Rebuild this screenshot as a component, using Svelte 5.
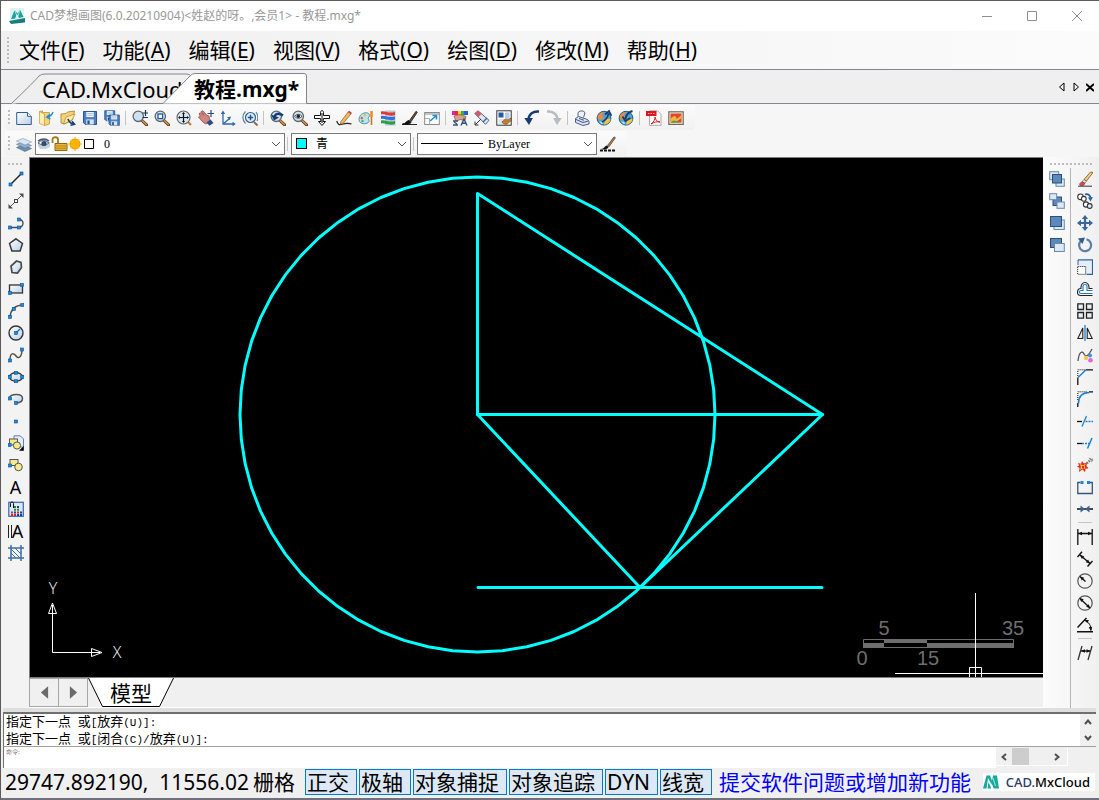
<script>
  const dot = (x, y) => `<rect x="${x - 1.5}" y="${y - 1.5}" width="3" height="3" fill="#1c8ae6" stroke="#0b4f94" stroke-width=".6"/>`;
  const lens = (inner) =>
    `<path d="M10 10.5l4.6 4.4" stroke="#5d3a1c" stroke-width="3" stroke-linecap="round"/><path d="M10.4 10.6l4 3.9" stroke="#d98b45" stroke-width="1.6" stroke-linecap="round"/><circle cx="6.3" cy="6.3" r="5.2" fill="#cfe0ee" stroke="#5a6672" stroke-width="1.3"/>${inner}`;
  const floppy = (x, y, s) =>
    `<g transform="translate(${x} ${y}) scale(${s})"><path d="M0 0h14v14H2l-2-2z" fill="#4a80c4" stroke="#214d8c"/><rect x="3" y=".5" width="8" height="5.5" fill="#eef5fb"/><path d="M4 2.2h6M4 4h6" stroke="#8fb0d4" stroke-width=".8"/><rect x="3" y="8.5" width="8" height="5.5" fill="#d6e4f3"/><rect x="4.2" y="9.6" width="2.4" height="4" fill="#29538f"/></g>`;
  const arrowhead = (x, y, a) => `<path d="M0 0l-4 -1.8v3.6z" transform="translate(${x} ${y}) rotate(${a})" fill="#111"/>`;
  const globe =
    `<circle cx="8" cy="8.2" r="6.9" fill="#4fa3d0" stroke="#1f5a86"/><path d="M1.8 6c2-3 4-4 6-3.6L6 5.2 7.600 8 5 10 2 9z" fill="#f08a3c"/><path d="M8 14.600l1-4 3-2 2.600.6c-.3 2.800-3 5-6.600 5.400z" fill="#f2c43c"/><path d="M3 11.500l3 .2 1.200 2.600C5 14 4 13 3 11.500z" fill="#a8e4e8"/>`;

  const icons = {
    fresh: `<path d="M.7 2.500h10.800l3.800 3.800v8.200H.7z" fill="url(#paper)" stroke="#2f5f9a"/><path d="M11.500 2.500v3.800h3.800" fill="#fff" stroke="#2f5f9a"/>`,
    open: `<path d="M1.500 1.500l3-.7v1.700h7v11.500l-5 1.500z" fill="#f5d27a" stroke="#b98b2a" stroke-width=".7"/><path d="M1.500 1.500L6.500 4v11.500l-5-2z" fill="#fdeeb4" stroke="#c59a3b" stroke-width=".7"/><path d="M15 2c-1 3-3 4.500-5.500 5M12 4.200L8.800 7l3.600 2" fill="none" stroke="#2a8ad4" stroke-width="1.500"/>`,
    recent: `<path d="M1 4l5-.5L7.500 2l7-1-2 9-8 4-3.500-1z" fill="#f5d27a" stroke="#a87a22" stroke-width=".8"/><path d="M3.500 14L6 7l9-3-3 6z" fill="#fdeba6" stroke="#a87a22" stroke-width=".6"/><path d="M8 9c1 3 2.500 4.500 5.500 5M10.500 15.200l4-1-2.500-3" fill="none" stroke="#1c3f75" stroke-width="1.700"/>`,
    save: floppy(1.5, 1.5, 0.93),
    saveall: floppy(0.7, 0.7, 0.72) + floppy(5, 5, 0.74),
    zoomrt: lens('<path d="M13.500 0v6M10.500 3h5.500M10.500 7.500h5.500" stroke="#17325f" stroke-width="1.200"/>'),
    zoomwin: lens('<rect x="4" y="4" width="4.600" height="4.600" fill="#fff" stroke="#27569a" stroke-width="1.300"/>'),
    zoomext: `<path d="M11 11l4 4" stroke="#c97a35" stroke-width="2.200"/><circle cx="7.500" cy="7.500" r="6.500" fill="#dbe6ee" stroke="#59636d" stroke-width="1.100"/><path d="M7.500 3v9M3 7.500h9" stroke="#111" stroke-width="1.200"/><path d="M7.500 2L6 4h3zM7.500 13L6 11h3zM2 7.500L4 6v3zM13 7.500L11 6v3z" fill="#111"/>`,
    pan: `<path d="M1 3.500l2-.8 3 2.500L3 1.500 5 .8l4 4.500 2 .7 1 5.500-4 2.500C5.500 13.500 3 10 .5 7l1.800-.6z" fill="#cf8580" stroke="#8f4f4e" stroke-width=".8"/><path d="M8.500 12.500l4-3L15.500 13l-4 2.700z" fill="#2d4c80"/><path d="M13 0v7M9.500 3.500h6.500" stroke="#2a4e86" stroke-width="1.200"/>`,
    ucs: `<path d="M3 3v11h10M3 14l6-5" fill="none" stroke="#2e69ad" stroke-width="1.300"/><path d="M3 .5L.8 4h4.400zM15.800 14l-3.300-2.200v4.400zM11 6.500l-4 .8 2.800 3z" fill="#2e69ad"/>`,
    zoomdyn: `<path d="M12 12l3.500 3.500" stroke="#9a6b45" stroke-width="2"/><circle cx="8.500" cy="7.500" r="5" fill="#e3eef8" stroke="#2e5f9b" stroke-width="1.200"/><path d="M8.500 4.800v5.400M5.800 7.500h5.400" stroke="#23518e" stroke-width="1.500"/><path d="M3.500 1.500C0 5 0 10 3.500 13.500M14 2c2 3 2 7 1 9" fill="none" stroke="#5a84b6" stroke-width="1.200"/>`,
    zoomprev: lens('<path d="M4.500 7.500C5 3.500 9 2.500 13 5.500" fill="none" stroke="#173c78" stroke-width="2.400"/><path d="M1 4.500l3 6 5-3z" fill="#173c78"/>'),
    find: lens('<path d="M2.500 6.300q3.800-4 7.600 0q-3.800 4-7.600 0z" fill="#fff" stroke="#333" stroke-width=".8"/><circle cx="6.300" cy="6.300" r="1.700" fill="#222"/>'),
    plane: `<path d="M6.500 5.500V2.500C6.500 0 9.500 0 9.500 2.500v3h6v3h-6L9 11.500h2.500L8 15.500 4.500 11.500H7l-.5-3h-6v-3z" fill="#fff" stroke="#111"/><path d="M8 3v10" stroke="#111"/>`,
    pencil: `<path d="M.8 11C1.500 14 3 15.300 6 14.300c3-1 6.500-1.500 9.500-.3" fill="none" stroke="#222" stroke-width="1.200"/><path d="M5 11.500L12.500 1.500l2.800 2L7.500 13l-3.200 1.300z" fill="#f0b862" stroke="#9b6a25" stroke-width=".8"/><path d="M12.500 1.500l2.800 2" stroke="#c3475a" stroke-width="2"/>`,
    palette: `<path d="M1 9.500C1 5 5 2.500 8.500 2.800 12 3 12 6 10.500 7.500c-1 1.500 1 2 .5 4-1 3-10 3.500-10-2z" fill="#bfe3ea" stroke="#4494b0"/><circle cx="3.800" cy="8" r="1.200" fill="#e2574b"/><circle cx="7" cy="5.300" r="1.200" fill="#f6b73c"/><circle cx="4.500" cy="11" r="1.200" fill="#4baf50"/><path d="M13.500 1v6" stroke="#f08a1e" stroke-width="2.600"/><path d="M13.500 7v8" stroke="#c9771e" stroke-width="1.600"/>`,
    layerpal: `<path d="M5 .5h10.500v15H5z" fill="#b9c6d6"/><path d="M1 1.500c4-1.500 7 2.500 14 .5v3C9 7 5 3.500 1 4.500z" fill="#e23a33"/><path d="M1 6c4-1.500 7 2.500 14 .5v3C9 11.500 5 8 1 9z" fill="#2f6fe0"/><path d="M1 10.500c4-1.500 7 2.500 14 .5v3c-6 2-10-1.500-14-.5z" fill="#2aa13c"/>`,
    brush: `<path d="M0 14.500h15M.5 14c3 0 3.500-3 6.500-3.500l2 2C8 14 5 15 .5 14z" fill="#111" stroke="#111" stroke-width=".9"/><path d="M7.500 10.500L14 1.300l1.300.9L9 11.800z" fill="#6b4a32" stroke="#222" stroke-width=".8"/>`,
    extern: `<rect x=".7" y="2.500" width="14.600" height="12" fill="#fff" stroke="#8a8a8a"/><path d="M.7 4h14.600" stroke="#8a8a8a"/><path d="M6 11l6-5M8.500 5.500h4v4" fill="none" stroke="#1d8bd8" stroke-width="1.600"/><path d="M1 8.500h4.500v6" fill="none" stroke="#aaa"/>`,
    style: `<path d="M0 1h3v4H0z" fill="#e31dc0"/><path d="M3 1h3v4H3z" fill="#e5312c"/><path d="M6 1h3v4H6z" fill="#f6d31e"/><path d="M9 1h3v4H9z" fill="#2fb24a"/><path d="M12 1h4v4h-4z" fill="#225be5"/><path d="M2 6l6-1.500 6 2-1 4-5-1-4 2z" fill="#d9a08c" stroke="#84503f" stroke-width=".7"/><path d="M1 11h5M1 15h5M2 12l3 2M9 15.500l3-6.500 3 6.500M10.300 13.200h3.500" fill="none" stroke="#35537c" stroke-width="1.400"/>`,
    match: `<path d="M.8 3.500L4 .8l11 9.500-3.500 4z" fill="#dfe8f0" stroke="#58636e"/><path d="M.8 3.500L4 .8l3.500 3-3.200 3.400z" fill="#d2596a"/><path d="M1 15l6-6M1 11.500V15h3.500" fill="none" stroke="#333"/><path d="M9 12l4-4" stroke="#386aa8" stroke-width="1.400"/>`,
    block: `<rect x=".8" y=".8" width="14.400" height="14.400" fill="#fff" stroke="#333"/><path d="M2.500 2.500h5v5h-5z" fill="#2659a0"/><path d="M9 2.500h4.500v7H9z" fill="#b8cbe0"/><path d="M2.500 9h6v5h-6z" fill="#dbe6f0"/><path d="M6 12c2-3 4-3 6-2l3-2 .8 2-3 2.500c-1 2-5 3-6.800-.5z" fill="#c97b33" stroke="#6d3d14" stroke-width=".6"/>`,
    undo: `<path d="M15 1.500C9 1 5 4 4.500 9.500" fill="none" stroke="#173c72" stroke-width="2.600"/><path d="M.3 8h8.600L5 15z" fill="#173c72"/>`,
    redo: `<path d="M1 1.500C7 1 11 4 11.500 9.500" fill="none" stroke="#b7bcc2" stroke-width="2.600"/><path d="M7.100 8h8.600L11 15z" fill="#b7bcc2"/>`,
    print: `<path d="M4 6.500V2.500L6 1h3.500L11 3 9.500 7.500" fill="#eef1f8" stroke="#53648f"/><path d="M1.500 8.500l3-2 9 3 1.500 2v2.500L9 15.500 1.500 12.500z" fill="#dde3f0" stroke="#4c5d8a"/><path d="M2 9.500l7 3 5.500-1.500M5 8.500l5 1.800" fill="none" stroke="#44558a"/>`,
    globeup: globe + `<path d="M6 12C10 10 12 7 12.500 3.500M9 4.500l4-3.500 2.500 4.800" fill="none" stroke="#173a70" stroke-width="1.700"/>`,
    globedown: globe + `<path d="M14.500 1C11 2 8 5 7.500 9M4.500 6.500L7.500 11l5-3" fill="none" stroke="#173a70" stroke-width="1.900"/>`,
    pdf: `<path d="M3.500.8h8l3.500 3.500v11H3.500z" fill="#fff" stroke="#a9a9a9"/><path d="M0 1h10.500v5H0z" fill="#d8171e"/><path d="M2 3.500h6.500" stroke="#f7a4a4" stroke-width="1.200" stroke-dasharray="1.500 1"/><path d="M5 14c3-2 4-5 4-7 .5 3 2 5 5 5-3-.8-6 .3-9 2z" fill="none" stroke="#d8171e"/>`,
    image: `<rect x=".8" y="1.800" width="14.400" height="12.600" fill="#efe7dc" stroke="#77695c" stroke-width="1.200"/><rect x="2.500" y="3.500" width="11" height="9" fill="#e0452c"/><path d="M2.500 9c3-4 6-4 6 0l5-4v3l-6 4.500h-5z" fill="#f4b43c"/><path d="M2.500 12.500l3-2 8 2z" fill="#499a3a"/>`,
    layers: `<path d="M.5 11.500L7 9l8.500 3.500L9 15.500z" fill="#6e8dac" stroke="#49688a" stroke-width=".6"/><path d="M.5 8.300L7 6l8.500 3.500L9 12.300z" fill="#93aec8" stroke="#5b7b9c" stroke-width=".6"/><path d="M.5 5L7 2.500 15.500 6 9 9z" fill="#dbe7f2" stroke="#7896b3" stroke-width=".6"/>`,
    brushline: `<path d="M1 13c3 0 3.500-3 6-3.500l1.500 1.500C8 13 5 14 1 13z" fill="#111"/><path d="M7.500 9.500L14 .8l1.500 1L9 10.800z" fill="#b3753f" stroke="#333" stroke-width=".6"/><path d="M0 14.500h16" stroke="#111" stroke-width="2" stroke-dasharray="3 1"/>`,

    line: `<path d="M2 14L14 2" stroke="#222" stroke-width="1.500"/>${dot(2.5, 13.5)}${dot(13.5, 2.5)}`,
    xline: `<path d="M1 15L15 1" stroke="#555"/><path d="M.5 15.500v-4.500l4.500 4.500zM15.500.5v4.500L11 .5z" fill="#4a4a55"/><rect x="6.500" y="6.500" width="3" height="3" fill="#fff" stroke="#444"/>`,
    pline: `<path d="M1.500 12.500h10M10.500 4.500c6-.5 6 8 0 8" fill="none" stroke="#4a4a4a" stroke-width="1.400"/>${dot(2, 12.5)}${dot(11, 12.5)}${dot(11, 4.5)}`,
    pentagon: `<path d="M8 1.800l6.500 4.700-2.400 7.500H3.900L1.500 6.500z" fill="url(#paper)" stroke="#3a3a3a" stroke-width="1.500"/>`,
    polygon: `<path d="M8.500 2l4.500 1.500.5 5-4 5.500-5.500-.5-1-6.500z" fill="url(#paper)" stroke="#4a4a4a" stroke-width="1.700"/>`,
    rect: `<rect x="1.500" y="4" width="13" height="8" fill="url(#paper)" stroke="#333" stroke-width="1.300"/>${dot(2, 12)}${dot(14, 4)}`,
    arc: `<path d="M2 14.500C2.500 7 7 2.500 14 2" fill="none" stroke="#57534c" stroke-width="1.500"/>${dot(2, 14)}${dot(6, 6)}${dot(14.300, 2)}`,
    circle: `<circle cx="8" cy="8" r="7" fill="url(#paper)" stroke="#333" stroke-width="1.400"/><path d="M8 8l4-4" stroke="#1670c4" stroke-width="1.300"/>${dot(8, 8)}`,
    spline: `<path d="M2 13C2 5 6 6 8 9s6 2 6-7" fill="none" stroke="#555043" stroke-width="1.500"/>${dot(2, 13.5)}${dot(14, 2.500)}`,
    ellipse: `<ellipse cx="8" cy="8" rx="6.500" ry="4.200" fill="url(#paper)" stroke="#333" stroke-width="1.400"/>${dot(8, 3.800)}${dot(8, 12.200)}${dot(1.800, 8)}${dot(14.200, 8)}`,
    earc: `<path d="M1.500 7C2 4 5 3.500 8.500 3.500c8 0 8 8 0 8.500" fill="url(#paper)" stroke="#555" stroke-width="1.500"/>${dot(2, 7.500)}${dot(8, 12)}`,
    point: dot(8, 8.5),
    insert: `<path d="M6 .8h6l3.500 3V12H6z" fill="#e4eefa" stroke="#5b83b3"/><rect x="1.500" y="4" width="8" height="6" fill="#f6e98e" stroke="#555"/><circle cx="9" cy="10.500" r="3.600" fill="#f6e98e" stroke="#555"/>${dot(1.600, 10)}<path d="M15.800 11v4.800H11z" fill="#000"/>`,
    make: `<rect x="2" y="2.500" width="8" height="6" fill="#f6e98e" stroke="#555"/><circle cx="10.500" cy="10" r="3.800" fill="#f6e98e" stroke="#555"/>${dot(2, 8.500)}`,
    hatch: `<rect x=".8" y="1.300" width="14.500" height="14" fill="#dbe7f6" stroke="#3468ac" stroke-width="1.200"/><path d="M3 11.500h2M3 14h2M6 14h2M9 11.500h2" stroke="#e02020" stroke-width="2"/><path d="M6 6h2M6 8.800h2M9 8.800h2" stroke="#1b8c2b" stroke-width="2"/><path d="M9 6h2M12 11.500h2M9 14h2M12 14h2M6 11.500h2" stroke="#183d9c" stroke-width="2"/><path d="M2.500 6V2.500c0-2 3-2 3 0V7" fill="none" stroke="#111"/>`,
    region: `<path d="M3 0v16M13 0v16M0 3h16M0 13h16" stroke="#3b6ea6" stroke-width="1.500"/><path d="M3 4l9 9M3 8l5 5M7 3l6 6" stroke="#3b6ea6"/>`,

    front: `<rect x=".7" y=".7" width="9" height="8" fill="#dce8f4" stroke="#6989ab"/><rect x="7" y="8" width="8.300" height="7.300" fill="#dce8f4" stroke="#6989ab"/><rect x="3.500" y="3.500" width="9" height="8.500" fill="#5c88ba" stroke="#274f80"/>`,
    back: `<rect x="4" y="4" width="8.500" height="8.500" fill="#5c88ba" stroke="#274f80"/><rect x=".7" y=".7" width="7" height="6" fill="#dce8f4" stroke="#6989ab"/><rect x="8" y="9" width="7.300" height="6.300" fill="#dce8f4" stroke="#6989ab"/>`,
    above: `<rect x="5" y="5" width="10.300" height="9.500" fill="#dce8f4" stroke="#6989ab"/><rect x="1.500" y="1.500" width="11" height="10" fill="#5c88ba" stroke="#274f80"/>`,
    below: `<rect x="1.500" y="1.500" width="11" height="9" fill="#5c88ba" stroke="#274f80"/><rect x="5.500" y="6.500" width="9.800" height="8" fill="#dce8f4" stroke="#6989ab"/>`,

    erase: `<path d="M1 15.200h14" stroke="#333"/><path d="M7 8.500L13.500 1 16 1.500 9.500 10z" fill="#f4cf73" stroke="#6e5630" stroke-width=".8"/><path d="M7 8.500l2.500 1.700L8 12.200 5 10.800z" fill="#dfe8f2" stroke="#555" stroke-width=".6"/><path d="M5 10.500l3 2-1.500 2h-3.200L2.500 13z" fill="#d9484d" stroke="#803036" stroke-width=".6"/>`,
    copy: `<circle cx="3.500" cy="3.800" r="2.800" fill="#fff" stroke="#333" stroke-width="1.100"/><circle cx="6.800" cy="5.800" r="2.400" fill="#fff" stroke="#333" stroke-width="1.100"/><circle cx="9" cy="11.500" r="2.600" fill="#fff" stroke="#333" stroke-width="1.100"/><circle cx="12.700" cy="13" r="2.400" fill="#dfe9f4" stroke="#333" stroke-width="1.100"/><path d="M8 1.500c3-1 5 .5 5.500 3" fill="none" stroke="#245b9c" stroke-width="1.800"/><path d="M11 4.500l2.600 4 2.200-4.500z" fill="#245b9c"/>`,
    move: `<path d="M8 2v12M2 8h12" stroke="#39689f" stroke-width="2.200"/><path d="M8 0L4.800 4h6.400zM8 16l-3.200-4h6.400zM0 8l4-3.200v6.400zM16 8l-4-3.200v6.400z" fill="#39689f"/>`,
    rotate: `<path d="M9.500 2.300a6 6 0 1 1-5.500 1.500" fill="none" stroke="#5b7fa8" stroke-width="2.200"/><path d="M.8 1.500L8 .5 5.500 7z" fill="#315d92"/>`,
    scale: `<rect x="1" y="1" width="14.300" height="14" fill="#e5eef9"/><path d="M1 .8h14.500v14.500H9.500" fill="none" stroke="#2e64a5" stroke-width="1.200"/><path d="M1 1v5" stroke="#2e64a5"/><rect x=".7" y="7.500" width="8" height="7.800" fill="#fff" stroke="#111" stroke-dasharray="1 1"/>`,
    offset: `<path d="M15.500 7.500H12C12.500-.5 3.500-.5 4 7.500H3.500C-.5 8 -.5 14.500 3.500 14.500H15.500" fill="#fff" stroke="#222" stroke-width="1.100"/><path d="M15.500 9.500H10V5.500C10 2.800 6 2.800 6 5.500V9.500H4C1.800 9.500 1.800 12.500 4 12.500H15.500" fill="none" stroke="#1d75c9" stroke-width="1.100"/>`,
    array: `<path d="M.8.800h5.700v5.700H.8zM9.500.800h5.700v5.700H9.500zM.8 9.500h5.700v5.700H.8zM9.500 9.500h5.700v5.700H9.500z" fill="#e7eef7" stroke="#222" stroke-width="1.300"/>`,
    mirror: `<path d="M8 0v16" stroke="#1f7dd0" stroke-width="1.300"/><path d="M5.800 3v10.500H.8zM10.200 3v10.500h5z" fill="#e8eef6" stroke="#222" stroke-width="1.100"/>`,
    pedit: `<path d="M1 14C2 5 5 3 7 7s5 1 8-5" fill="none" stroke="#555" stroke-width="1.300"/><circle cx="9" cy="11" r="2.200" fill="#f6c451"/><circle cx="13" cy="8.500" r="2" fill="#4c88e8"/><circle cx="13.500" cy="13.200" r="2.300" fill="#dc67dc"/>`,
    chamfer: `<path d="M.8 16V8.500M9 .8h7" stroke="#111" stroke-width="1.300"/><path d="M1 8.500L9 .8" stroke="#1d7fd4" stroke-width="1.500"/><path d="M.8 7V.8h7" fill="none" stroke="#111" stroke-dasharray="1 1"/>`,
    fillet: `<path d="M.8 16v-4M12 .8h4" stroke="#111" stroke-width="1.300"/><path d="M1.500 12.500C1.500 5 6 1.500 12.500 1.500" fill="none" stroke="#1d7fd4" stroke-width="1.500"/><path d="M.8 9V.8h9" fill="none" stroke="#111" stroke-dasharray="1 1"/>`,
    trim: `<path d="M0 8.500h5" stroke="#111" stroke-width="1.300"/><path d="M5 13.500L9.500 3" stroke="#1d7fd4" stroke-width="1.300"/><path d="M8.500 8.500h7.500" stroke="#1d7fd4" stroke-width="1.300" stroke-dasharray="2 1"/>`,
    extend: `<path d="M0 8.500h5" stroke="#111" stroke-width="1.300"/><path d="M5 8.500h7" stroke="#1d7fd4" stroke-width="1.300" stroke-dasharray="2 1"/><path d="M10.500 13.500L15 3" stroke="#1d7fd4" stroke-width="1.500"/>`,
    explode: `<path d="M8 8L14.500 2" stroke="#777" stroke-width="2.400" stroke-dasharray="1.500 1"/><path d="M12 .8l1.500 2L16 2l-1.500 3" fill="none" stroke="#888"/><path d="M1 6l3 .7L5 4l2 2.500 3-1L9.500 9l2 2.200-3 .8-.5 3.300L5.500 12.500 2 15l.5-4L0 9.500l2-1z" fill="#e5322a"/><path d="M3 7l3 1.500L9 6.500 7.500 9l1 3L6 11l-3 2 1-3z" fill="#fbd43c"/><path d="M5 9h2v2H5z" fill="#e5322a"/>`,
    brk: `<path d="M3.500 3.500H.8v11h14.500v-11h-3" fill="none" stroke="#35547c" stroke-width="1.300"/><path d="M3.500 2h3v3h-3zM10 2h3v3h-3z" fill="#1d83dc"/>`,
    join: `<path d="M0 8h16" stroke="#111" stroke-width="1.500"/><path d="M8 8L3.500 4.500v7zM8 8l4.500-3.500v7z" fill="#3a6494"/>`,
    dimlin: `<path d="M.8 0v16M15.200 0v16M1 4.500h14" stroke="#111" stroke-width="1.300"/>${arrowhead(15, 4.5, 0)}${arrowhead(1, 4.5, 180)}`,
    dimali: `<path d="M3 4l10 8.500M.5 6L5 .8M10.500 15.500L15.500 10" stroke="#111" stroke-width="1.400"/>${arrowhead(13, 12.5, 40)}${arrowhead(3, 4, 220)}`,
    dimrad: `<circle cx="8" cy="8" r="7.200" fill="none" stroke="#555" stroke-width="1.200"/><path d="M8.500 8.500L3 3.500" stroke="#111" stroke-width="1.300"/>${arrowhead(3, 3.500, 222)}`,
    dimdia: `<circle cx="8" cy="8" r="7.200" fill="none" stroke="#555" stroke-width="1.200"/><path d="M3 3.500l10 9.500" stroke="#111" stroke-width="1.300"/>${arrowhead(2.500, 3, 222)}${arrowhead(13.300, 13.200, 42)}`,
    dimang: `<path d="M0 14.800h16M.5 10.500L9.500 1" stroke="#111" stroke-width="1.500"/><path d="M8 3.500c4 1.500 6 5 6 10" fill="none" stroke="#111"/>${arrowhead(7.500, 3, 205)}${arrowhead(14, 14, 82)}`,
    dimobl: `<path d="M1 15L5 1M11 15L15 1M4 6h9.500" stroke="#333" stroke-width="1.300"/>${arrowhead(13.500, 6, 0)}${arrowhead(4, 6, 180)}`,
    logo: `<path d="M3.500 1.500L7 1.500 9.500 8 8 10.500 5 4.500 3.500 14.500H0zM10 1.500h4L16 14.500h-5.500L8.500 9zM5.500 8l2.800 6.500H4.500z" fill="#14a99b"/><path d="M5 4.500L10.500 14.500M10 4l2.500 8" fill="none" stroke="#fff" stroke-width=".7"/>`,
    applogo: `<rect x="1" y="0" width="14" height="15" fill="#e4f1f0"/><path d="M0 13l16-3v4.500L2 16z" fill="#187d80"/><path d="M2 11L5.500 2l3 3.500L11 1.500 14.500 9l-4.500 1-2-4-2 4.800z" fill="#14a99b"/><path d="M5.500 2l3.300 8M11 1.500L9 8" stroke="#fff" stroke-width=".6"/>`
  };

  const menus = [['文件', 'F'], ['功能', 'A'], ['编辑', 'E'], ['视图', 'V'], ['格式', 'O'], ['绘图', 'D'], ['修改', 'M'], ['帮助', 'H']];
  const mainTools = ['fresh', 'open', 'recent', 'save', 'saveall', '|', 'zoomrt', 'zoomwin', 'zoomext', 'pan', 'ucs', 'zoomdyn', '|', 'zoomprev', 'find', 'plane', 'pencil', 'palette', 'layerpal', 'brush', 'extern', '|', 'style', 'match', 'block', '|', 'undo', 'redo', '|', 'print', 'globeup', 'globedown', '|', 'pdf', 'image'];
  const drawTools = ['line', 'xline', 'pline', 'pentagon', 'polygon', 'rect', 'arc', 'circle', 'spline', 'ellipse', 'earc', 'point', 'insert', 'make', 'text', 'hatch', 'mtext', 'region'];
  const orderTools = ['front', 'back', 'above', 'below'];
  const editTools = ['erase', 'copy', 'move', 'rotate', 'scale', 'offset', 'array', 'mirror', 'pedit', 'chamfer', 'fillet', 'trim', 'extend', 'explode', 'brk', 'join', '|', 'dimlin', 'dimali', 'dimrad', 'dimdia', 'dimang', '|', 'dimobl'];
  const history = ['指定下一点 或[放弃(U)]:', '指定下一点 或[闭合(C)/放弃(U)]:'];
  const pieces = (s) => s.match(/[\u4e00-\u9fff]+|[^\u4e00-\u9fff]+/g);

  let modes = $state([
    { name: '栅格', on: false },
    { name: '正交', on: true },
    { name: '极轴', on: true },
    { name: '对象捕捉', on: true },
    { name: '对象追踪', on: true },
    { name: 'DYN', on: true },
    { name: '线宽', on: true }
  ]);

  const segments = 60;
  const ring = Array.from({ length: segments }, (_, i) => {
    const a = (i * 2 * Math.PI) / segments;
    return `${(447.5 + 237.5 * Math.cos(a)).toFixed(1)},${(256.5 + 237.5 * Math.sin(a)).toFixed(1)}`;
  }).join(' ');
</script>

{#snippet icon(name)}
  <svg class="icon" viewBox="0 0 16 16" aria-hidden="true">{@html icons[name]}</svg>
{/snippet}

{#snippet tool(name)}
  {#if name === '|'}
    <span class="sep"></span>
  {:else if name === 'text'}
    <button class="tool letter">A</button>
  {:else if name === 'mtext'}
    <button class="tool letter"><i class="bars"></i>A</button>
  {:else}
    <button class="tool" aria-label={name}>{@render icon(name)}</button>
  {/if}
{/snippet}

{#snippet chevron()}
  <svg class="chevron" viewBox="0 0 10 6" aria-hidden="true"><path d="M1 1l4 4 4-4" /></svg>
{/snippet}

<div class="window">
  <header class="title">
    {@render icon('applogo')}
    <span>CAD梦想画图(6.0.20210904)&lt;姓赵的呀。,会员1&gt; - 教程.mxg*</span>
    <div class="winbtns">
      <button aria-label="minimize"><svg viewBox="0 0 12 12"><path d="M1 6.500h10" /></svg></button>
      <button aria-label="maximize"><svg viewBox="0 0 12 12"><path d="M1.500 1.500h9v9h-9z" /></svg></button>
      <button aria-label="close"><svg viewBox="0 0 12 12"><path d="M1 1l10 10M11 1L1 11" /></svg></button>
    </div>
  </header>

  <nav class="menu">
    <span class="grip tall"></span>
    {#each menus as [name, key]}
      <button>{name}(<u>{key}</u>)</button>
    {/each}
  </nav>

  <div class="tabs">
    <button class="tab first">
      <svg viewBox="0 0 182 31" aria-hidden="true"><path class="idle" d="M0 31Q24 8 28 3Q30 1 34 1H176Q179 1 181 4" /></svg>
      <span>CAD.MxCloud</span>
    </button>
    <button class="tab active">
      <svg viewBox="0 0 145 31" aria-hidden="true"><path d="M0 30.500L27 3Q29 .5 32 .5H141Q143.500 .5 143.500 3V30.500" /></svg>
      <span>教程.mxg*</span>
    </button>
    <div class="tabnav">
      <button aria-label="previous"><svg viewBox="0 0 8 10"><path d="M6 1v8L1.500 5z" /></svg></button>
      <button aria-label="next"><svg viewBox="0 0 8 10"><path d="M2 1v8l4.500-4z" /></svg></button>
      <button aria-label="close tab"><svg viewBox="0 0 8 10"><path class="thick" d="M0 2l8 7M8 2L0 9" /></svg></button>
    </div>
  </div>

  <div class="bars-area">
    <div class="bar">
      <span class="grip"></span>
      {#each mainTools as name}{@render tool(name)}{/each}
    </div>
    <div class="bar">
      <span class="grip"></span>
      {@render tool('layers')}
      <div class="combo layer">
        <span class="deco">
          <svg width="60" height="16" viewBox="0 0 60 16" aria-hidden="true">
            <path d="M1 4h8l4 2v5l-4 2H3L1 10z" fill="#c5d0dc" />
            <path d="M1 7q5-5 11 0-5 4-11 0z" fill="#fff" stroke="#5a6b80" />
            <circle cx="7" cy="7.500" r="2.600" fill="#2d4c74" />
            <path d="M1 5q6-4 11 0" fill="none" stroke="#3d5270" stroke-width="1.500" />
            <path d="M15.500 7V3.500c0-3 5.500-3 5.500 0V8" fill="none" stroke="#a97716" stroke-width="1.800" />
            <path d="M18 7.500h12v7H18z" fill="#e7b53a" stroke="#94660f" />
            <path d="M18.500 10h11M18.500 12.300h11" stroke="#b98420" />
            <circle cx="38" cy="8" r="5" fill="#ffb400" stroke="#f59300" />
            <path d="M38 1v2M38 13v2M31 8h2M43 8h2M33.500 3.500l1 1M41.500 11.500l1 1M33.500 12.500l1-1M41.500 4.500l1-1" stroke="#ffc933" stroke-width="1.500" />
            <path d="M47.500 3.500h9v9h-9z" fill="#fff" stroke="#000" />
          </svg>
        </span>
        <select aria-label="图层"><option>0</option></select>
        {@render chevron()}
      </div>
      <span class="sep"></span>
      <div class="combo color">
        <span class="deco"><i class="swatch"></i></span>
        <select aria-label="颜色"><option>青</option></select>
        {@render chevron()}
      </div>
      <span class="sep"></span>
      <div class="combo ltype">
        <span class="deco"><i class="stroke"></i></span>
        <select aria-label="线型"><option>ByLayer</option></select>
        {@render chevron()}
      </div>
      {@render tool('brushline')}
    </div>
  </div>

  <main class="work">
    <aside class="side left">
      <span class="grip flat"></span>
      {#each drawTools as name}{@render tool(name)}{/each}
    </aside>

    <section class="center">
      <div class="canvas">
        <svg viewBox="0 0 1013 519" aria-label="drawing">
          <defs>
            <linearGradient id="paper" x1="0" y1="0" x2="1" y2="1">
              <stop offset="0" stop-color="#ffffff" />
              <stop offset="1" stop-color="#b9d0e6" />
            </linearGradient>
          </defs>
          <g class="cyan">
            <polygon points={ring} />
            <path d="M447.500 35.500V256.500H792.500Z" />
            <path d="M447.500 256.500L610 429.500L792.500 256.500M448 429.500H792" />
          </g>
          <g class="ucs">
            <path d="M22.500 455V494.500H61" />
            <path d="M22.500 445L18.500 455.500H26.500ZM22.500 447V455M61.500 490.500V498.500L72 494.500ZM61 494.500H70" />
            <text x="23" y="436">Y</text>
            <text x="87" y="500">X</text>
          </g>
          <g class="scale">
            <path class="frame" d="M833.500 481.500H983.500V489.500H833.500Z" />
            <path d="M833 485H854V490H833ZM854 481H897V485H854ZM897 485H984V490H897Z" />
            <text x="854" y="477">5</text>
            <text x="983" y="477">35</text>
            <text x="832" y="507">0</text>
            <text x="898" y="507">15</text>
          </g>
          <path class="cursor" d="M945.500 435V519M865 515.500H1013M939.500 519V509.500H951.500V519" />
        </svg>
      </div>
      <div class="sheets">
        <button class="nav" aria-label="previous sheet"><svg viewBox="0 0 10 16"><path d="M9 1v14L1 8z" /></svg></button>
        <button class="nav" aria-label="next sheet"><svg viewBox="0 0 10 16"><path d="M1 1v14l8-7z" /></svg></button>
        <button class="sheet">
          <svg viewBox="0 0 86 29" aria-hidden="true"><path d="M.5 0L14.500 28.500H71.500L85.500 0" /></svg>
          <span>模型</span>
        </button>
      </div>
    </section>

    <aside class="side right">
      <span class="grip flat wide"></span>
      <div class="cols">
        <div class="col">{#each orderTools as name}{@render tool(name)}{/each}</div>
        <div class="col edit">{#each editTools as name}{@render tool(name)}{/each}</div>
      </div>
    </aside>
  </main>

  <section class="command">
    <div class="log">
      <div class="lines">
        {#each history as row}
          <p>{#each pieces(row) as part}{#if part > '一'}{part}{:else}<span>{part}</span>{/if}{/each}</p>
        {/each}
      </div>
      <div class="vscroll">
        <button aria-label="scroll up"><svg viewBox="0 0 8 6"><path d="M1 5l3-3.500L7 5" /></svg></button>
        <button aria-label="scroll down"><svg viewBox="0 0 8 6"><path d="M1 1l3 3.500L7 1" /></svg></button>
      </div>
    </div>
    <div class="prompt">
      <div class="entry">
        <label for="cmd">命令:</label>
        <input id="cmd" type="text" />
      </div>
      <div class="hscroll">
        <button aria-label="scroll left"><svg viewBox="0 0 6 8"><path d="M5 1L1.500 4 5 7" /></svg></button>
        <i></i>
        <button class="end" aria-label="scroll right"><svg viewBox="0 0 6 8"><path d="M1 1l3.500 3L1 7" /></svg></button>
      </div>
    </div>
  </section>

  <footer class="status">
    <output>29747.892190,&nbsp; 11556.02</output>
    {#each modes as mode}
      <button class:on={mode.on} aria-pressed={mode.on} onclick={() => (mode.on = !mode.on)}>{mode.name}</button>
    {/each}
    <a href="#feedback">提交软件问题或增加新功能</a>
    <div class="brand">{@render icon('logo')}<span><b>CAD.</b>MxCloud</span></div>
  </footer>
</div>

<style>
  :global(body) {
    margin: 0;
    background: #f0f0f0;
  }
  * {
    box-sizing: border-box;
  }
  button {
    margin: 0;
    padding: 0;
    border: 0;
    background: none;
    color: inherit;
    font: inherit;
    white-space: nowrap;
  }
  .window {
    display: flex;
    flex-direction: column;
    min-height: 100vh;
    border: 1px solid #5f5a5a;
    border-right: 0;
    border-bottom: 2px solid #70707c;
    background: #f0f0f0;
    color: #000;
    font: 21px/28px 'Noto Sans', 'Noto Sans CJK SC', sans-serif;
  }
  .icon {
    display: block;
    flex: none;
    width: 16px;
    height: 16px;
    fill: none;
  }

  .title {
    display: flex;
    align-items: center;
    height: 30px;
    padding-left: 8px;
    gap: 5px;
    background: #fff;
    color: #999;
    font-size: 12px;
    line-height: 16px;
    white-space: nowrap;
  }
  .winbtns {
    display: flex;
    margin-left: auto;
  }
  .winbtns button {
    width: 45px;
    height: 28px;
  }
  .winbtns svg {
    display: block;
    width: 12px;
    height: 12px;
    margin: 0 auto;
    fill: none;
    stroke: #8e8e8e;
  }

  .grip {
    flex: none;
    width: 2px;
    height: 16px;
    background: repeating-linear-gradient(#bdbdbd 0 2px, transparent 2px 4px);
  }
  .grip.tall {
    height: 26px;
    margin: 0 10px 0 6px;
  }
  .grip.flat {
    width: 15px;
    height: 2px;
    margin: 5px 0 3px;
    background: repeating-linear-gradient(90deg, #bdbdbd 0 2px, transparent 2px 4px);
  }
  .grip.wide {
    width: 43px;
  }
  .menu {
    display: flex;
    align-items: center;
    height: 38px;
    background: linear-gradient(90deg, #f0f0f0, #fbfbfb);
  }
  .menu button {
    margin-right: 18px;
  }
  .menu u {
    text-underline-offset: 2px;
    text-decoration-thickness: 1px;
  }

  .tabs {
    display: flex;
    align-items: flex-end;
    height: 35px;
    border-top: 1px solid #85858e;
    border-bottom: 1px solid #85858e;
    padding-left: 10px;
    background: #efefef;
  }
  .tab {
    display: grid;
    align-items: center;
    height: 31px;
    margin-bottom: -1px;
  }
  .tab > * {
    grid-area: 1 / 1;
  }
  .tab svg {
    display: block;
    width: 100%;
    height: 31px;
  }
  .tab path {
    fill: #fff;
    stroke: #85858e;
  }
  .tab path.idle {
    fill: #efefef;
  }
  .tab span {
    padding-left: 31px;
    text-align: left;
  }
  .first {
    width: 182px;
    font-size: 22px;
  }
  .active {
    width: 145px;
    margin-left: -30px;
    font-weight: 700;
  }
  .tabnav {
    display: flex;
    align-self: center;
    gap: 5px;
    margin-left: auto;
    padding-right: 4px;
  }
  .tabnav button {
    width: 9px;
    height: 12px;
  }
  .tabnav svg {
    display: block;
    width: 8px;
    height: 10px;
    fill: none;
    stroke: #000;
  }
  .thick {
    stroke-width: 2;
  }

  .bars-area {
    display: grid;
    gap: 1px;
    padding: 1px 0;
    background: #f6f6f6;
  }
  .bar {
    display: flex;
    align-items: center;
    justify-self: start;
    height: 25px;
    margin-left: 4px;
    padding-right: 8px;
    border-radius: 3px;
    background: linear-gradient(#fbfbfb, #f1f1f1);
  }
  .bar .grip {
    margin: 0 3px;
  }
  .tool {
    display: grid;
    place-items: center;
    flex: none;
    width: 22px;
    height: 22px;
  }
  .tool.letter {
    display: flex;
    align-items: center;
    justify-content: center;
    font-size: 18px;
    line-height: 22px;
  }
  .bars {
    width: 4px;
    height: 13px;
    border: solid #222;
    border-width: 0 1px;
  }
  .sep {
    flex: none;
    width: 6px;
    height: 14px;
    background: linear-gradient(#c4c4c4, #c4c4c4) 2px 0 / 1px 100% no-repeat;
  }
  .combo {
    display: grid;
    align-items: center;
    height: 22px;
    border: 1px solid #7a7a7a;
    background: #fff;
  }
  .combo > * {
    grid-area: 1 / 1;
  }
  .combo select {
    appearance: none;
    width: 100%;
    height: 20px;
    margin: 0;
    border: 0;
    background: none;
    color: #000;
    font: 12px/20px 'Liberation Serif', 'Noto Sans CJK SC', serif;
  }
  .deco {
    display: flex;
    align-items: center;
    padding-left: 3px;
    pointer-events: none;
  }
  .chevron {
    width: 10px;
    height: 6px;
    margin-right: 3px;
    justify-self: end;
    fill: none;
    stroke: #555;
    pointer-events: none;
  }
  .layer {
    width: 250px;
  }
  .layer .deco {
    padding-left: 1px;
  }
  .layer select {
    padding-left: 68px;
  }
  .color {
    width: 120px;
  }
  .color select {
    padding-left: 24px;
  }
  .ltype {
    width: 180px;
  }
  .ltype select {
    padding-left: 70px;
  }
  .swatch {
    width: 11px;
    height: 11px;
    margin-left: 1px;
    border: 1px solid #000;
    background: #0ff;
  }
  .stroke {
    width: 62px;
    height: 1px;
    background: #000;
  }

  .work {
    display: flex;
    flex: 1;
  }
  .side {
    display: flex;
    flex-direction: column;
    align-items: center;
    flex: none;
  }
  .left {
    width: 28px;
    padding: 1px 0 0 1px;
    background: #f3f3f3;
  }
  .right {
    width: 56px;
    padding-top: 1px;
    background: linear-gradient(90deg, #fcfcfc, #f0f0f0);
  }
  .cols {
    display: grid;
    grid-template-columns: 27px 29px;
    flex: 1;
  }
  .col {
    padding-left: 3px;
  }
  .edit {
    border-left: 1px solid #b4b4b4;
  }
  .col .sep {
    display: block;
    width: 14px;
    height: 6px;
    margin-left: 4px;
    background: linear-gradient(#c4c4c4, #c4c4c4) 0 2px / 100% 1px no-repeat;
  }
  .center {
    display: flex;
    flex-direction: column;
    flex: 1;
    min-width: 0;
  }
  .canvas {
    flex: 1;
    border: 1px solid #7c7c7c;
    border-right: 0;
    background: #000;
  }
  .canvas svg {
    display: block;
    width: 100%;
    height: auto;
  }
  .cyan {
    fill: none;
    stroke: #0ff;
    stroke-width: 3;
    stroke-linecap: round;
    stroke-linejoin: round;
  }
  .ucs {
    fill: none;
    stroke: #fff;
  }
  .ucs text {
    fill: #fff;
    stroke: none;
    font: 300 16px 'Open Sans', sans-serif;
    text-anchor: middle;
  }
  .scale {
    fill: #6e6e6e;
    font: 20px 'Liberation Sans', sans-serif;
    text-anchor: middle;
  }
  .frame {
    fill: none;
    stroke: #6e6e6e;
  }
  .cursor {
    fill: none;
    stroke: #fff;
  }
  .sheets {
    display: flex;
    height: 30px;
    border-bottom: 1px solid #fff;
  }
  .nav {
    width: 30px;
    height: 29px;
    margin-right: -1px;
    border: 1px solid #a6a6a6;
  }
  .nav svg {
    display: block;
    width: 9px;
    height: 15px;
    margin: 0 auto;
    fill: #6a6a6a;
  }
  .sheet {
    display: grid;
    place-items: center;
    width: 86px;
    height: 29px;
    margin-left: 1px;
  }
  .sheet > * {
    grid-area: 1 / 1;
  }
  .sheet svg {
    display: block;
    width: 86px;
    height: 29px;
    fill: #fff;
    stroke: #000;
  }

  .command {
    margin: 0 3px 0 2px;
    border-top: 4px solid #dedede;
  }
  .log {
    display: flex;
    height: 35px;
    border-top: 2px solid #6f6f6f;
    border-left: 1px solid #6f6f6f;
    border-bottom: 1px solid #a0a0a0;
    background: #fff;
  }
  .lines {
    flex: 1;
    padding-left: 2px;
    font: 13px/14px 'Noto Sans CJK SC', sans-serif;
  }
  .lines p {
    height: 17px;
    margin: 0;
    white-space: pre;
  }
  .lines span {
    font: 11px/11px 'Liberation Mono', monospace;
  }
  .vscroll {
    display: grid;
    width: 16px;
    background: #f0f0f0;
  }
  .vscroll button,
  .hscroll button {
    display: grid;
    place-items: center;
  }
  .vscroll svg {
    width: 8px;
    height: 6px;
    fill: none;
    stroke: #505050;
    stroke-width: 2;
  }
  .prompt {
    display: flex;
    height: 21px;
  }
  .entry {
    display: flex;
    align-items: flex-start;
    flex: 1;
    border-left: 1px solid #6f6f6f;
    background: #fff;
  }
  .entry label {
    padding: 2px 0 0 2px;
    color: #777;
    font: 6px/6px 'Noto Sans CJK SC', sans-serif;
  }
  .entry input {
    flex: 1;
    height: 19px;
    border: 0;
    outline: 0;
    background: none;
    font: 12px/16px 'Noto Sans CJK SC', sans-serif;
  }
  .hscroll {
    display: flex;
    width: 72px;
    height: 18px;
    margin: 1px 28px 0 0;
    border-right: 1px solid #fff;
    border-bottom: 1px solid #fff;
  }
  .hscroll button {
    width: 16px;
  }
  .hscroll .end {
    margin-left: auto;
    width: 20px;
  }
  .hscroll i {
    width: 17px;
    background: #cdcdcd;
  }
  .hscroll svg {
    width: 6px;
    height: 8px;
    fill: none;
    stroke: #505050;
    stroke-width: 2;
  }

  .status {
    display: flex;
    align-items: center;
    gap: 2px;
    height: 30px;
    padding: 0 4px 2px;
    white-space: nowrap;
  }
  .status output {
    min-width: 244px;
  }
  .status button {
    height: 26px;
    padding: 0 7px 0 1px;
    border: 1px solid transparent;
    line-height: 24px;
  }
  .status button.on {
    border-color: #0078d7;
    background: #dce9f4;
  }
  .status a {
    padding-left: 5px;
    color: #00f;
    text-decoration: none;
  }
  .brand {
    display: flex;
    align-items: center;
    gap: 7px;
    height: 18px;
    margin-left: auto;
    padding-right: 5px;
    background: #fff;
    font-size: 13px;
    font-weight: 500;
    line-height: 18px;
  }
  .brand b {
    color: #2b3a67;
    font-weight: 500;
  }
</style>
